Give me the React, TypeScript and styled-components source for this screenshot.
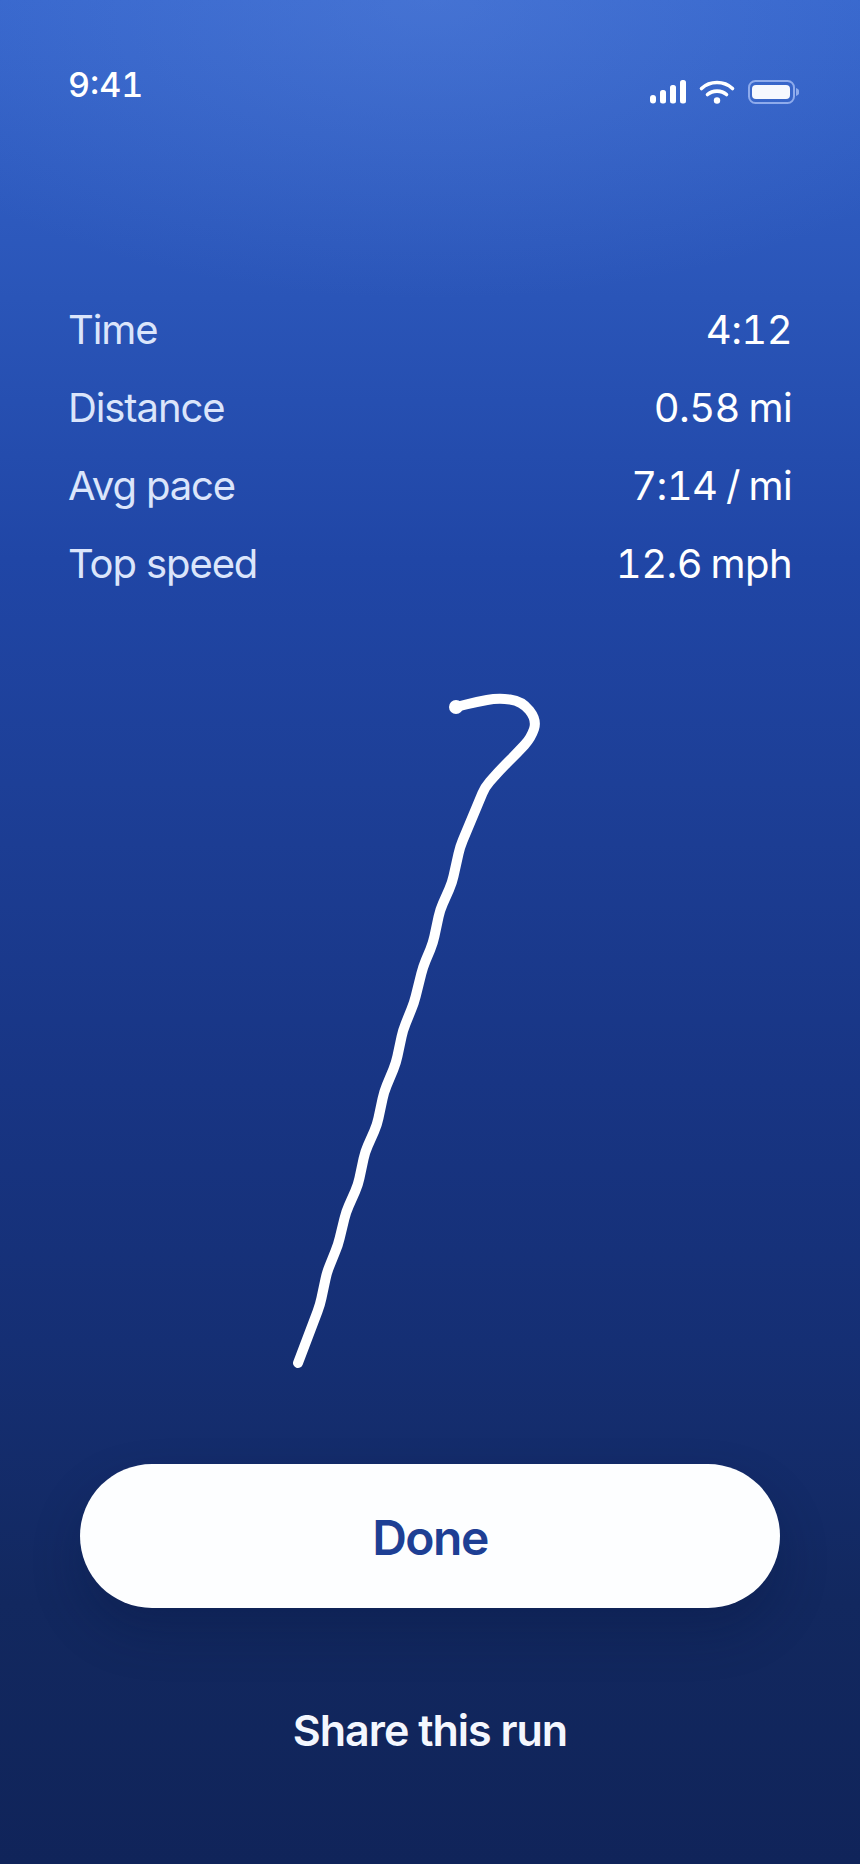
import React from "react";
import styled, { createGlobalStyle } from "styled-components";

const Global = createGlobalStyle`
  html, body { margin: 0; padding: 0; background: #10245a; }
  * { box-sizing: border-box; }
`;

const Screen = styled.main`
  width: 860px;
  height: 1864px;
  overflow: hidden;
  display: flex;
  flex-direction: column;
  font-family: Inter, "Liberation Sans", sans-serif;
  color: #fff;
  background:
    radial-gradient(ellipse 620px 300px at 50% 0, rgba(110, 150, 230, 0.28), rgba(110, 150, 230, 0) 100%),
    linear-gradient(180deg, #3565cc 0%, #2a55b8 16%, #2046a6 30%, #1d3f97 42%, #183584 58%, #152f74 72%, #12285f 86%, #10245a 100%);
`;

const StatusBar = styled.header`
  height: 128px;
  padding: 65px 61px 0 68px;
  display: flex;
  justify-content: space-between;
  align-items: flex-start;
`;

const Clock = styled.span`
  font-size: 34px;
  line-height: 40px;
  font-weight: 500;
  font-variant-numeric: tabular-nums;
  letter-spacing: 0;
`;

const StatusIcons = styled.svg`
  display: block;
  margin-top: 14px;
  width: 149px;
  height: 26px;
`;

const Stats = styled.section`
  margin-top: 176px;
  padding: 0 68px;
  display: flex;
  flex-direction: column;
  gap: 26px;
`;

const Row = styled.div`
  display: flex;
  justify-content: space-between;
  align-items: center;
  height: 52px;
  font-size: 40px;
  line-height: 52px;
`;

const Label = styled.span`
  color: #dbe5fb;
  font-weight: 400;
  letter-spacing: -1.1px;
`;

const Value = styled.span`
  color: #fff;
  font-weight: 400;
  font-variant-numeric: tabular-nums;
  letter-spacing: -0.6px;
  word-spacing: -1.5px;
`;

const RouteMap = styled.svg`
  display: block;
  margin-top: 90px;
  width: 860px;
  height: 720px;
  flex: none;
`;

const Actions = styled.div`
  margin-top: 64px;
  padding: 0 80px;
  display: flex;
  flex-direction: column;
  align-items: center;
`;

const DoneButton = styled.button`
  width: 700px;
  height: 144px;
  padding: 3px 0 0;
  border: 0;
  border-radius: 72px;
  background: #fdfeff;
  color: #1e3f94;
  font: 600 48px/1 Inter, "Liberation Sans", sans-serif;
  letter-spacing: -1.5px;
  box-shadow: 0 24px 48px rgba(8, 20, 60, 0.28);
`;

const ShareLink = styled.button`
  margin-top: 96px;
  border: 0;
  background: none;
  color: #f4f7fe;
  font: 600 43px/50px Inter, "Liberation Sans", sans-serif;
  letter-spacing: -1px;
`;

const points: [number, number][] = [
  [456, 707], [476, 702], [498, 698], [522, 701], [537, 720], [531, 738], [518, 752], [500, 770], [485, 787],
  [460, 847], [452, 883], [440, 910], [433, 943], [423, 967],
  [414, 1003], [403, 1030], [396, 1063], [384, 1092], [377, 1125],
  [365, 1152], [358, 1185], [346, 1212], [338, 1245], [327, 1272],
  [320, 1305], [298, 1363],
];

const HOOK_END = 7;

const roundedPath = (pts: [number, number][], radius: number) => {
  let d = `M${pts[0][0]} ${pts[0][1]}`;
  for (let i = 1; i < pts.length - 1; i++) {
    const [px, py] = pts[i];
    const [ax, ay] = pts[i - 1];
    const [bx, by] = pts[i + 1];
    const la = Math.hypot(ax - px, ay - py);
    const lb = Math.hypot(bx - px, by - py);
    const limit = i <= HOOK_END ? 100 : radius;
    const ra = Math.min(limit, la / 2);
    const rb = Math.min(limit, lb / 2);
    d += ` L${px + ((ax - px) * ra) / la} ${py + ((ay - py) * ra) / la}`;
    d += ` Q${px} ${py} ${px + ((bx - px) * rb) / lb} ${py + ((by - py) * rb) / lb}`;
  }
  const last = pts[pts.length - 1];
  return `${d} L${last[0]} ${last[1]}`;
};

const stats = [
  ["Time", "4:12"],
  ["Distance", "0.58 mi"],
  ["Avg pace", "7:14 / mi"],
  ["Top speed", "12.6 mph"],
];

export default function App() {
  return (
    <Screen>
      <Global />
      <StatusBar>
        <Clock>9:41</Clock>
        <StatusIcons viewBox="650 79 149 26">
          <rect x="650" y="95" width="6" height="8.5" rx="3" fill="#fff" />
          <rect x="660" y="90" width="6" height="13.5" rx="2.5" fill="#fff" />
          <rect x="670" y="85" width="6" height="18.5" rx="2.5" fill="#fff" />
          <rect x="680" y="80" width="6" height="23.5" rx="2.5" fill="#fff" />
          <path d="M701.5 88.5 C710 80.5 724 80.5 732.5 88.5" fill="none" stroke="#fff" strokeWidth="3.6" strokeLinecap="round" />
          <path d="M707.5 94.5 C712.5 90 721.5 90 726.5 94.5" fill="none" stroke="#fff" strokeWidth="3.6" strokeLinecap="round" />
          <circle cx="717" cy="100.5" r="3.2" fill="#fff" />
          <rect x="749" y="81" width="45" height="22" rx="6.5" fill="none" stroke="#8eabec" strokeWidth="2" />
          <rect x="752" y="85" width="38" height="14" rx="4" fill="#f6f8fe" />
          <path d="M796 88 C798.5 89 799.5 90.5 799.5 92 C799.5 93.5 798.5 95 796 96 Z" fill="#8eabec" />
        </StatusIcons>
      </StatusBar>
      <Stats>
        {stats.map(([label, value]) => (
          <Row key={label}>
            <Label>{label}</Label>
            <Value>{value}</Value>
          </Row>
        ))}
      </Stats>
      <RouteMap viewBox="0 680 860 720">
        <path d={roundedPath(points, 7)} fill="none" stroke="#fff" strokeWidth="10" strokeLinecap="round" strokeLinejoin="round" />
        <circle cx="456" cy="707" r="7" fill="#fff" />
      </RouteMap>
      <Actions>
        <DoneButton>Done</DoneButton>
        <ShareLink>Share this run</ShareLink>
      </Actions>
    </Screen>
  );
}
